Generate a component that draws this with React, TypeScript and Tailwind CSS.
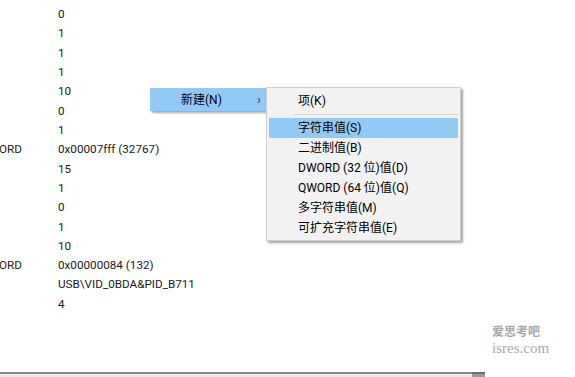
import React from "react"

const rows: { left?: string; value: string }[] = [
  { value: "0" },
  { value: "1" },
  { value: "1" },
  { value: "1" },
  { value: "10" },
  { value: "0" },
  { value: "1" },
  { left: "ORD", value: "0x00007fff (32767)" },
  { value: "15" },
  { value: "1" },
  { value: "0" },
  { value: "1" },
  { value: "10" },
  { left: "ORD", value: "0x00000084 (132)" },
  { value: "USB\\VID_0BDA&PID_B711" },
  { value: "4" },
]

const subItems = [
  "字符串值(S)",
  "二进制值(B)",
  "DWORD (32 位)值(D)",
  "QWORD (64 位)值(Q)",
  "多字符串值(M)",
  "可扩充字符串值(E)",
]

const font = { fontFamily: 'Roboto, "Noto Sans CJK SC", sans-serif' }

export default function App() {
  return (
    <div
      className="relative w-[575px] h-[377px] overflow-hidden bg-white text-[12px] text-[#1a1a1a] flex flex-col"
      style={font}
    >
      <div className="flex flex-col pt-[5px] flex-1 text-[11.7px]">
        {rows.map((r, i) => (
          <div key={i} className="flex items-center h-[19.33px]">
            <span className="w-[59px] -ml-[1px] shrink-0">{r.left ?? ""}</span>
            <span>{r.value}</span>
          </div>
        ))}
      </div>

      {/* watermark */}
      <div className="absolute left-[492px] top-[324px] flex flex-col text-[#a8a8a8]">
        <span
          className="text-[12px] leading-[14px] font-bold"
          style={{ fontFamily: '"Noto Sans CJK SC", sans-serif' }}
        >
          爱思考吧
        </span>
        <span className="text-[15px] leading-[15px] mt-[3px]" style={{ fontFamily: '"Liberation Serif", serif' }}>
          isres.com
        </span>
      </div>

      {/* bottom scrollbar edge */}
      <div className="h-[5px] flex">
        <div className="w-[472px] border-t-2 border-[#8a8a8a] bg-[#ececec]"></div>
        <div className="w-[13px] border-t-2 border-[#6f6f6f] bg-[#9a9a9a]"></div>
        <div className="flex-1"></div>
      </div>

      {/* first menu */}
      <div className="absolute left-[150px] top-[88px] w-[117px] h-[23px] bg-[#91c9f7] shadow-[2px_2px_2px_rgba(0,0,0,0.35)] flex items-center">
        <span className="ml-[31px] text-black">新建(N)</span>
        <span className="ml-auto mr-[6px] text-[13px] text-[#333]">›</span>
      </div>

      {/* submenu */}
      <div className="absolute left-[266px] top-[87px] w-[195px] h-[154px] bg-[#f2f2f2] border border-[#cfcfcf] shadow-[2px_2px_2px_rgba(0,0,0,0.35)] flex flex-col pt-[3px] text-black">
        <div className="h-5 flex items-center pl-[31px]">项(K)</div>
        <div className="h-[7px] flex items-center">
          <div className="ml-[27px] mr-[2px] flex-1 h-px bg-[#d7d7d7]"></div>
        </div>
        {subItems.map((t, i) => (
          <div
            key={t}
            className={
              "h-5 flex items-center pl-[29px] mx-[2px] " + (i === 0 ? "bg-[#91c9f7]" : "")
            }
          >
            {t}
          </div>
        ))}
      </div>
    </div>
  )
}
